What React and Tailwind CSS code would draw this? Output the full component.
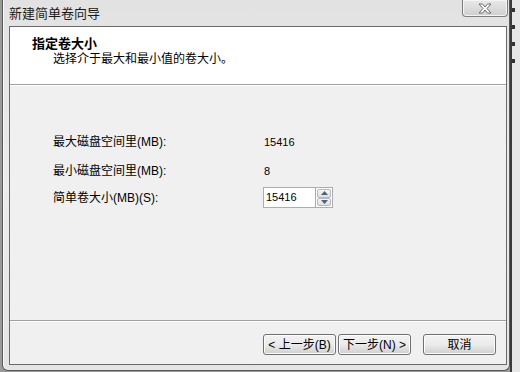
import React from 'react';

const FONT = { fontFamily: '"Liberation Sans", "Noto Sans CJK SC", sans-serif' };

const WizardButton = ({ children }) => (
  <button
    type="button"
    className="w-[73px] h-[21px] flex items-center justify-center rounded-[3px] border border-[#707070] bg-gradient-to-b from-[#f2f2f2] via-[#ebebeb] to-[#cfcfcf] text-[12px] text-black leading-none shadow-[inset_0_0_0_1px_#fcfcfc]"
  >
    {children}
  </button>
);

const SpinArrow = ({ up }) => (
  <svg width="7" height="4" viewBox="0 0 7 4">
    <path d={up ? 'M0 4 L3.5 0 L7 4 Z' : 'M0 0 L3.5 4 L7 0 Z'} fill="#4d6185" />
  </svg>
);

export default function App() {
  const rows = [
    { label: '最大磁盘空间里(MB):', value: '15416' },
    { label: '最小磁盘空间里(MB):', value: '8' },
  ];

  return (
    <div className="w-[520px] h-[372px] overflow-hidden bg-[#9a9a9a] flex" style={FONT}>
      {/* window frame (glass) */}
      <div className="ml-[2px] w-[508px] h-[371px] flex flex-col rounded-b-[6px] border-l border-r border-b border-[#5a5a5a] bg-gradient-to-b from-[#e2e2e2] via-[#ececec] to-[#e4e4e4] shadow-[inset_1px_0_0_#f8f8f8]">
        {/* title bar */}
        <div className="h-[26px] flex items-start justify-between shrink-0">
          <div className="pl-[6px] pt-[6px] text-[13px] leading-[16px] text-[#1a1a1a]">新建简单卷向导</div>
          <div className="mr-[1px] w-[46px] h-[17px] rounded-b-[4px] border border-t-0 border-[#7d7d7d] bg-gradient-to-b from-[#e9e9e9] to-[#cfcfcf] flex items-center justify-center shadow-[inset_0_0_0_1px_#f4f4f4]">
            <svg width="14" height="11" viewBox="0 0 14 11">
              <path
                d="M1 1 L4.5 1 L7 4 L9.5 1 L13 1 L9 5.5 L13 10 L9.5 10 L7 7 L4.5 10 L1 10 L5 5.5 Z"
                fill="#ffffff"
                stroke="#6c6c6c"
                strokeWidth="1"
                strokeLinejoin="round"
              />
            </svg>
          </div>
        </div>

        {/* client area */}
        <div className="ml-[6px] w-[498px] h-[339px] border border-[#6a6a6a] flex flex-col bg-[#f0f0f0]">
          {/* header */}
          <div className="h-[58px] bg-white border-b border-[#a0a0a0] shrink-0 pl-[22px] pt-[8px]">
            <div className="text-[13px] leading-[17px] font-bold text-black">指定卷大小</div>
            <div className="pl-[21px] text-[12px] leading-[15px] text-black">选择介于最大和最小值的卷大小。</div>
          </div>
          <div className="h-px bg-white shrink-0" />

          {/* body */}
          <div className="flex-1 pl-[43px] pt-[48px] text-[12px] text-black">
            {rows.map((row) => (
              <div key={row.label} className="flex items-center h-[16px] mb-[13px]">
                <div className="w-[211px]">{row.label}</div>
                <div className="text-[11px]">{row.value}</div>
              </div>
            ))}
            <div className="flex items-center -mt-[5px]">
              <div className="w-[210px]">简单卷大小(MB)(S):</div>
              <div className="flex h-[21px]">
                <div className="w-[53px] h-[21px] border border-[#abadb3] bg-white flex items-center pl-[2px] text-[11px]">
                  15416
                </div>
                <div className="w-[17px] h-[21px] flex flex-col border border-l-0 border-[#abadb3] bg-white">
                  <div className="flex-1 mx-px mt-px border border-[#b9b9b9] rounded-[2px] bg-gradient-to-b from-[#f6f6f6] to-[#dedede] flex items-center justify-center">
                    <SpinArrow up />
                  </div>
                  <div className="flex-1 mx-px mb-px border border-[#b9b9b9] rounded-[2px] bg-gradient-to-b from-[#f6f6f6] to-[#dedede] flex items-center justify-center">
                    <SpinArrow />
                  </div>
                </div>
              </div>
            </div>
          </div>

          {/* footer */}
          <div className="h-px bg-[#a0a0a0] shrink-0" />
          <div className="h-px bg-white shrink-0" />
          <div className="h-[42px] shrink-0 flex items-start pt-[12px] pl-[253px]">
            <div className="flex gap-[2px]">
              <WizardButton>&lt; 上一步(B)</WizardButton>
              <WizardButton>下一步(N) &gt;</WizardButton>
            </div>
            <div className="ml-[12px]">
              <WizardButton>取消</WizardButton>
            </div>
          </div>
        </div>
      </div>

      {/* desktop behind on the right */}
      <div className="flex-1 flex">
        <div className="w-[2px] bg-[#3a3a3a]" />
        <div className="flex-1 bg-[#e6e6e6] flex flex-col gap-[13px] pt-[8px]">
          {[0, 1, 2, 3].map((i) => (
            <div key={i} className="w-[3px] h-[4px] bg-[#333]" />
          ))}
        </div>
      </div>
    </div>
  );
}
